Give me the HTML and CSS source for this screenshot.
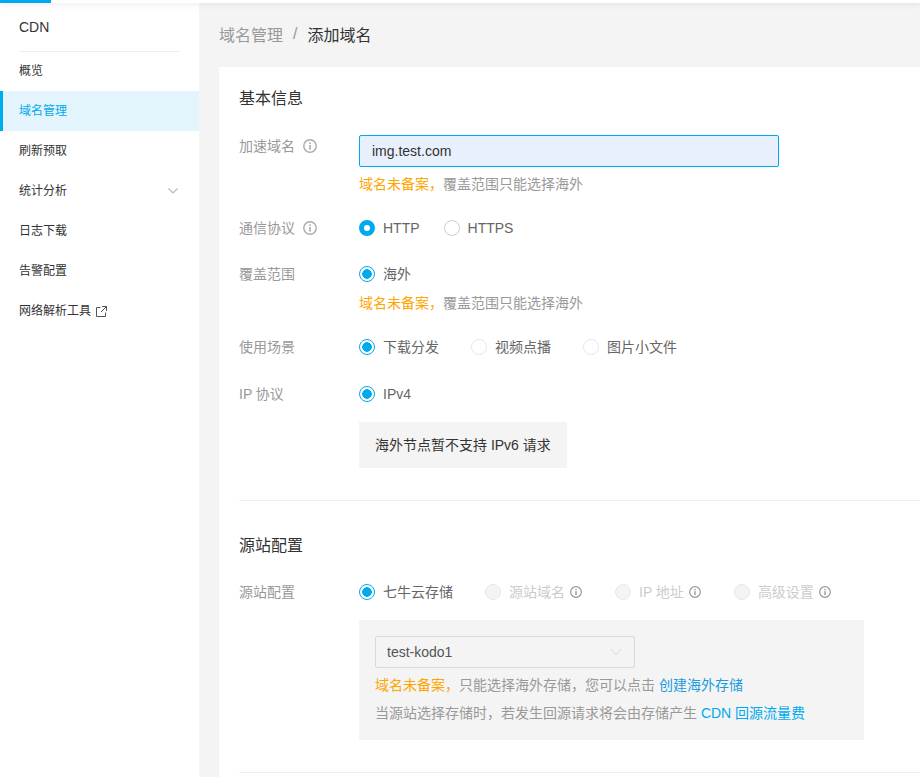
FILE: index.html
```html
<!DOCTYPE html>
<html lang="zh-CN">
<head>
  <meta charset="UTF-8" />
  <title>添加域名</title>
  <link rel="stylesheet" href="styles.css">
</head>
<body>
  <div class="topbar"><div class="progress"></div></div>

  <div class="layout">
    <nav class="sidebar">
      <div class="side-title">CDN</div>
      <a class="side-item">概览</a>
      <a class="side-item active">域名管理</a>
      <a class="side-item">刷新预取</a>
      <a class="side-item">统计分析
        <svg class="side-arrow" width="10" height="6" viewBox="0 0 10 6"><path d="M.5.5l4.5 4.5 4.5-4.5" fill="none" stroke="#bbb" stroke-width="1.2"/></svg>
      </a>
      <a class="side-item">日志下载</a>
      <a class="side-item">告警配置</a>
      <a class="side-item">网络解析工具
        <svg class="side-link" width="11" height="11" viewBox="0 0 11 11"><path d="M4.5 1.5H.5v9h9v-4M6 .5h4.5V5M10.5.5L5 6" fill="none" stroke="#555" stroke-width="1"/></svg>
      </a>
    </nav>

    <main class="main">
      <div class="breadcrumb"><span class="crumb">域名管理</span><span class="crumb-sep">/</span><span>添加域名</span></div>

      <div class="card">
        <h2 class="section-title">基本信息</h2>

        <div class="row row-domain">
          <div class="label">加速域名<svg class="info" viewBox="0 0 14 14"><use href="#i-info"/></svg></div>
          <div class="control">
            <input class="text-input" type="text" value="img.test.com" />
            <div class="hint hint-domain"><span class="warn">域名未备案，</span>覆盖范围只能选择海外</div>
          </div>
        </div>

        <div class="row row-protocol">
          <div class="label">通信协议<svg class="info" viewBox="0 0 14 14"><use href="#i-info"/></svg></div>
          <div class="control radios">
            <label class="radio"><i class="dot solid"></i>HTTP</label>
            <label class="radio gap-http"><i class="dot"></i>HTTPS</label>
          </div>
        </div>

        <div class="row row-cover">
          <div class="label">覆盖范围</div>
          <div class="control">
            <div class="radios"><label class="radio"><i class="dot on"></i>海外</label></div>
            <div class="hint hint-cover"><span class="warn">域名未备案，</span>覆盖范围只能选择海外</div>
          </div>
        </div>

        <div class="row row-scene">
          <div class="label">使用场景</div>
          <div class="control radios">
            <label class="radio"><i class="dot on"></i>下载分发</label>
            <label class="radio gap-scene"><i class="dot faint"></i>视频点播</label>
            <label class="radio gap-scene"><i class="dot faint"></i>图片小文件</label>
          </div>
        </div>

        <div class="row row-ip">
          <div class="label">IP 协议</div>
          <div class="control">
            <div class="radios"><label class="radio"><i class="dot on"></i>IPv4</label></div>
            <div class="notice">海外节点暂不支持 IPv6 请求</div>
          </div>
        </div>

        <hr class="divider" />

        <h2 class="section-title source-title">源站配置</h2>

        <div class="row row-source">
          <div class="label">源站配置</div>
          <div class="control">
            <div class="radios">
              <label class="radio"><i class="dot on"></i>七牛云存储</label>
              <label class="radio disabled gap-source"><i class="dot off"></i>源站域名<svg class="info small" viewBox="0 0 14 14"><use href="#i-info"/></svg></label>
              <label class="radio disabled gap-source2"><i class="dot off"></i>IP 地址<svg class="info small" viewBox="0 0 14 14"><use href="#i-info"/></svg></label>
              <label class="radio disabled gap-source2"><i class="dot off"></i>高级设置<svg class="info small" viewBox="0 0 14 14"><use href="#i-info"/></svg></label>
            </div>
            <div class="source-box">
              <div class="select">test-kodo1
                <svg width="12" height="8" viewBox="0 0 12 8"><path d="M1 1l5 6 5-6" fill="none" stroke="#ddd" stroke-width="1"/></svg>
              </div>
              <div class="hint hint-store"><span class="warn">域名未备案，</span>只能选择海外存储，您可以点击 <a class="link">创建海外存储</a></div>
              <div class="hint hint-fee">当源站选择存储时，若发生回源请求将会由存储产生 <a class="link-bright">CDN 回源流量费</a></div>
            </div>
          </div>
        </div>

        <hr class="divider divider-end" />
      </div>
    </main>
  </div>

  <svg width="0" height="0" class="defs">
    <symbol id="i-info" viewBox="0 0 14 14">
      <circle cx="7" cy="7" r="6.2" fill="none" stroke="currentColor" stroke-width="1.4"/>
      <rect x="6.2" y="6" width="1.6" height="4.6" fill="currentColor"/>
      <rect x="6.2" y="3.4" width="1.6" height="1.6" fill="currentColor"/>
    </symbol>
  </svg>
</body>
</html>
```

FILE: styles.css
```css
* {
  box-sizing: border-box;
}

html, body {
  height: 100%;
}

body {
  margin: 0;
  overflow: hidden;
  font-family: "Liberation Sans", "Noto Sans CJK SC", sans-serif;
  font-size: 14px;
  color: #333;
  background-color: #f4f4f4;
}

.defs {
  position: absolute;
}

.topbar {
  position: relative;
  z-index: 2;
  height: 3px;
  background-color: #fff;
  box-shadow: 0 1px 6px rgba(0, 0, 0, 0.12);
}

.progress {
  width: 51px;
  height: 3px;
  background-color: #00aaee;
}

.layout {
  display: flex;
  height: 774px;
}

/* sidebar */
.sidebar {
  flex: 0 0 199px;
  background-color: #fff;
  font-size: 12px;
}

.side-title {
  height: 49px;
  margin: 0 20px -1px 19px;
  padding-top: 15px;
  font-size: 14px;
  line-height: 18px;
  border-bottom: 1px solid #eee;
}

.side-item {
  display: flex;
  align-items: center;
  height: 40px;
  padding-left: 19px;
  line-height: 18px;
  color: #333;
}

.side-item.active {
  padding-left: 16px;
  color: #00aaee;
  background-color: #e3f4fc;
  border-left: 3px solid #00aaee;
}

.side-arrow {
  margin-left: auto;
  margin-right: 21px;
}

.side-link {
  margin-left: 5px;
}

/* main */
.main {
  flex: 1;
  min-width: 0;
  padding-left: 20px;
}

.breadcrumb {
  display: flex;
  align-items: center;
  height: 64px;
  padding-bottom: 2px;
  font-size: 16px;
  color: #333;
}

.crumb {
  color: #999;
}

.crumb-sep {
  margin: 0 10px;
  color: #999;
}

.card {
  height: 720px;
  padding: 0 0 0 20px;
  background-color: #fff;
}

.section-title {
  margin: 0;
  padding-top: 22px;
  font-size: 16px;
  font-weight: normal;
  line-height: 20px;
  color: #333;
}

.row {
  display: flex;
}

.row-domain {
  margin-top: 26px;
}

.row-protocol {
  margin-top: 24px;
}

.row-cover {
  margin-top: 26px;
}

.row-scene {
  margin-top: 24px;
}

.row-ip {
  margin-top: 27px;
}

.row-source {
  margin-top: 26px;
}

.label {
  display: flex;
  align-items: center;
  flex: 0 0 120px;
  height: 20px;
  line-height: 20px;
  color: #999;
}

.row-domain .label {
  margin-top: 1px;
}

.info {
  width: 14px;
  height: 14px;
  margin-left: 8px;
  color: #aaa;
}

.info.small {
  width: 12px;
  height: 12px;
  margin-left: 5px;
  color: #999;
}

.control {
  min-width: 0;
}

.radios {
  display: flex;
  align-items: center;
  height: 20px;
}

.radio {
  display: flex;
  align-items: center;
  line-height: 20px;
  color: #666;
}

.dot {
  width: 16px;
  height: 16px;
  margin-right: 8px;
  border: 1px solid #ccc;
  border-radius: 50%;
  background-color: #fff;
}

.dot.solid {
  border: 5px solid #00aaee;
}

.dot.on {
  border-color: #00aaee;
  background: radial-gradient(circle, #00aaee 0, #00aaee 4.5px, #fff 5px);
}

.dot.faint {
  border-color: #e8e8e8;
}

.dot.off {
  border-color: #e8e8e8;
  background-color: #f4f4f4;
}

.gap-http {
  margin-left: 24px;
}

.gap-scene {
  margin-left: 32px;
}

.gap-source {
  margin-left: 32px;
}

.gap-source2 {
  margin-left: 33px;
}

.radio.disabled {
  color: #ccc;
}

.text-input {
  display: block;
  width: 420px;
  height: 32px;
  padding: 0 12px;
  font: inherit;
  color: #333;
  background-color: #e8f0fe;
  border: 1px solid #00aaee;
  border-radius: 2px;
  outline: none;
}

.hint {
  line-height: 20px;
  color: #999;
}

.warn {
  color: #ffa500;
}

.hint-domain {
  margin-top: 7px;
}

.hint-cover {
  margin-top: 9px;
}

.notice {
  width: 208px;
  height: 46px;
  margin-top: 18px;
  padding-left: 16px;
  line-height: 46px;
  color: #333;
  background-color: #f4f4f4;
}

.divider {
  height: 1px;
  margin: 32px 0 0;
  border: none;
  background-color: #eee;
}

.source-title {
  padding-top: 35px;
}

.source-box {
  width: 505px;
  height: 120px;
  margin-top: 18px;
  padding: 16px;
  background-color: #f4f4f4;
}

.select {
  display: flex;
  align-items: center;
  justify-content: space-between;
  width: 260px;
  height: 32px;
  padding: 0 12px 0 11px;
  color: #555;
  border: 1px solid #d9d9d9;
  border-radius: 2px;
}

.hint-store {
  margin-top: 7px;
}

.hint-fee {
  margin-top: 8px;
}

.link {
  color: #1a9be0;
}

.link-bright {
  color: #00aaee;
}

.divider-end {
  margin-top: 32px;
}
```
